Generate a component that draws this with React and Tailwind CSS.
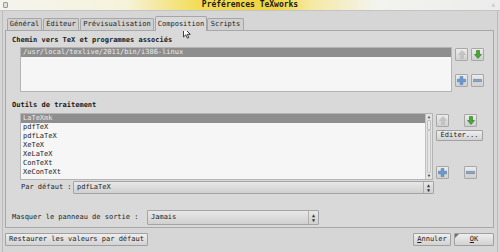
import React from 'react';

const mono = "font-['DejaVu_Sans_Mono','Liberation_Mono',monospace]";

const tabs = [
  { label: 'Général', w: 'w-[35px]' },
  { label: 'Éditeur', w: 'w-[36px]' },
  { label: 'Prévisualisation', w: 'w-[74px]' },
  { label: 'Composition', w: 'w-[52px]', active: true },
  { label: 'Scripts', w: 'w-[37px]' },
];

const tools = ['LaTeXmk', 'pdfTeX', 'pdfLaTeX', 'XeTeX', 'XeLaTeX', 'ConTeXt', 'XeConTeXt'];

function ArrowUp({ disabled }) {
  return (
    <svg width="8" height="9" viewBox="0 0 8 9">
      <path d="M4 0.5 L7.5 4.5 H5.5 V8.5 H2.5 V4.5 H0.5 Z" fill={disabled ? '#c4c4c4' : '#3a9a2a'} stroke={disabled ? '#b8b8b8' : '#2a7a1a'} strokeWidth="0.6" />
    </svg>
  );
}

function ArrowDown({ disabled }) {
  return (
    <svg width="8" height="9" viewBox="0 0 8 9">
      <path d="M4 8.5 L7.5 4.5 H5.5 V0.5 H2.5 V4.5 H0.5 Z" fill={disabled ? '#c4c4c4' : '#48a834'} stroke={disabled ? '#b8b8b8' : '#2a7a1a'} strokeWidth="0.6" />
    </svg>
  );
}

function Plus() {
  return (
    <svg width="9" height="9" viewBox="0 0 9 9">
      <path d="M3.2 0.5 H5.8 V3.2 H8.5 V5.8 H5.8 V8.5 H3.2 V5.8 H0.5 V3.2 H3.2 Z" fill="#6a9ad0" stroke="#3c6ea8" strokeWidth="0.5" />
    </svg>
  );
}

function Minus() {
  return (
    <svg width="9" height="9" viewBox="0 0 9 9">
      <rect x="0.5" y="3.2" width="8" height="2.6" fill="#8aa4c4" stroke="#6480a4" strokeWidth="0.5" />
    </svg>
  );
}

function IconButton({ children, className = '' }) {
  return (
    <div className={`grid h-[13px] w-[13px] place-items-center rounded-[1px] border border-[#a8a8a8] bg-gradient-to-b from-[#ececec] to-[#cfcfcf] ${className}`}>
      {children}
    </div>
  );
}

function Spinner() {
  return (
    <div className="flex h-full w-[10px] flex-col items-center justify-center border-l border-[#b0b0b0] text-[5px] leading-[5px] text-[#333]">
      <span>▲</span>
      <span>▼</span>
    </div>
  );
}

function Combo({ value, className }) {
  return (
    <div className={`flex items-center rounded-[1px] border border-[#a4a4a4] bg-gradient-to-b from-[#e8e8e8] to-[#d0d0d0] ${className}`}>
      <span className="flex-1 pl-[3px] text-[7px] leading-[9px] text-[#222]">{value}</span>
      <Spinner />
    </div>
  );
}

function PushButton({ children, className = '' }) {
  return (
    <div className={`flex items-center justify-center rounded-[1px] border border-[#a0a0a0] bg-gradient-to-b from-[#eeeeee] to-[#d2d2d2] text-[7px] leading-[9px] text-[#222] ${className}`}>
      {children}
    </div>
  );
}

export default function App() {
  return (
    <div className={`relative h-[252px] w-[500px] overflow-hidden bg-[#d6d6d6] ${mono}`}>
      {/* title bar */}
      <div className="relative flex h-[11px] items-center justify-center border-b border-[#c4c4c4] bg-[linear-gradient(90deg,#f4f4ee_0%,#f6f3dc_25%,#f3dc55_40%,#f0d440_55%,#f6e9a0_62%,#f3f3ef_75%,#ececec_100%)]">
        <div className="absolute left-[3px] top-[2px] h-[6px] w-[5px] rounded-[1px] border border-[#9a9a9a] bg-[#e0e0e0]" />
        <span className="text-[8px] font-bold leading-[10px] text-[#1a1a1a]">Préférences TeXworks</span>
        <span className="absolute right-[5px] top-[1px] text-[6px] leading-[8px] text-[#b0b0b0]">x</span>
      </div>

      <div className="mx-[2px] flex h-[241px] flex-col border-x border-[#bcbcbc] px-[2px]">
        {/* tabs */}
        <div className="mt-[5px] flex h-[14px] items-end pl-[2px]">
          {tabs.map((t) => (
            <div
              key={t.label}
              className={`flex ${t.w} items-center justify-center rounded-t-[2px] border border-b-0 border-[#a6a6a6] text-[7px] leading-[9px] text-[#222] ${
                t.active ? 'relative z-10 -mb-px h-[15px] bg-[#d9d9d9]' : 'mr-[1px] h-[12px] bg-[#d0d0d0]'
              }`}
            >
              {t.label}
            </div>
          ))}
        </div>

        {/* tab panel */}
        <div className="flex h-[198px] w-[489px] flex-col border border-[#a8a8a8] bg-[#d9d9d9]">
          <div className="ml-[6px] mt-[5px] h-[9px] text-[7px] font-bold leading-[9px] text-[#1a1a1a]">Chemin vers TeX et programmes associés</div>

          <div className="mt-[2px] flex">
            <div className="ml-[14px] h-[45px] w-[432px] border border-[#b4b4b4] bg-[#f6f6f6]">
              <div className="h-[9px] bg-[#8e8e8e] pl-[2px] text-[7px] leading-[9px] text-[#ececec]">/usr/local/texlive/2011/bin/i386-linux</div>
            </div>
            <div className="ml-[3px] flex flex-col">
              <div className="mt-[1px] flex gap-[3px]">
                <IconButton><ArrowUp disabled /></IconButton>
                <IconButton><ArrowDown /></IconButton>
              </div>
              <div className="mt-[13px] flex gap-[3px]">
                <IconButton><Plus /></IconButton>
                <IconButton><Minus /></IconButton>
              </div>
            </div>
          </div>

          <div className="ml-[6px] mt-[9px] h-[9px] text-[7px] font-bold leading-[9px] text-[#1a1a1a]">Outils de traitement</div>

          <div className="mt-[3px] flex">
            <div className="ml-[14px] flex h-[67px] w-[413px] border border-[#b4b4b4] bg-[#f6f6f6]">
              <div className="flex-1 overflow-hidden">
                {tools.map((t, i) => (
                  <div
                    key={t}
                    className={`h-[9px] pl-[2px] text-[7px] leading-[9px] ${i === 0 ? 'bg-[#8e8e8e] text-[#ececec]' : 'text-[#222]'}`}
                  >
                    {t}
                  </div>
                ))}
              </div>
              <div className="flex w-[7px] flex-col border-l border-[#c0c0c0] bg-[#e2e2e2]">
                <div className="flex h-[6px] items-center justify-center text-[4px] leading-[4px] text-[#555]">▲</div>
                <div className="mx-px h-[10px] rounded-[1px] border border-[#bdbdbd] bg-[#ebebeb]" />
                <div className="mx-px flex-1 rounded-[1px] border border-[#c6c6c6] bg-[#e6e6e6]" />
                <div className="flex h-[6px] items-center justify-center text-[4px] leading-[4px] text-[#333]">▼</div>
              </div>
            </div>
            <div className="ml-[3px] flex w-[47px] flex-col">
              <div className="mt-[1px] flex justify-between pr-[6px]">
                <IconButton><ArrowUp disabled /></IconButton>
                <IconButton><ArrowDown /></IconButton>
              </div>
              <PushButton className="mt-[3px] h-[11px] w-[47px]">Éditer...</PushButton>
              <div className="mt-[25px] flex justify-between pr-[6px]">
                <IconButton><Plus /></IconButton>
                <IconButton><Minus /></IconButton>
              </div>
            </div>
          </div>

          <div className="mt-[1px] flex h-[13px] items-center">
            <span className="ml-[15px] w-[52px] text-[7px] leading-[9px] text-[#222]">Par défaut :</span>
            <Combo value="pdfLaTeX" className="h-[13px] w-[361px]" />
          </div>

          <div className="mt-[16px] flex h-[15px] items-center">
            <span className="ml-[6px] w-[135px] text-[7px] leading-[9px] text-[#222]">Masquer le panneau de sortie :</span>
            <Combo value="Jamais" className="h-[15px] w-[172px]" />
          </div>
        </div>

        {/* bottom buttons */}
        <div className="mt-[5px] flex items-center">
          <PushButton className="h-[13px] w-[143px]">Restaurer les valeurs par défaut</PushButton>
          <div className="flex-1" />
          <PushButton className="h-[13px] w-[38px]"><span className="underline">A</span>nnuler</PushButton>
          <div className="relative ml-[3px]">
            <PushButton className="h-[13px] w-[40px]"><span className="underline">O</span>K</PushButton>
            <div className="absolute left-[1px] top-[1px] h-0 w-0 border-r-[4px] border-t-[4px] border-r-transparent border-t-[#707070]" />
          </div>
          <div className="w-[1px]" />
        </div>
      </div>

      {/* mouse cursor */}
      <svg className="absolute left-[183px] top-[27px]" width="8" height="12" viewBox="0 0 8 12">
        <path d="M0.5 0.5 V10 L2.8 7.8 L4.4 11.2 L5.8 10.6 L4.3 7.3 H7.3 Z" fill="#ffffff" stroke="#111111" strokeWidth="0.8" strokeLinejoin="round" />
      </svg>
    </div>
  );
}
